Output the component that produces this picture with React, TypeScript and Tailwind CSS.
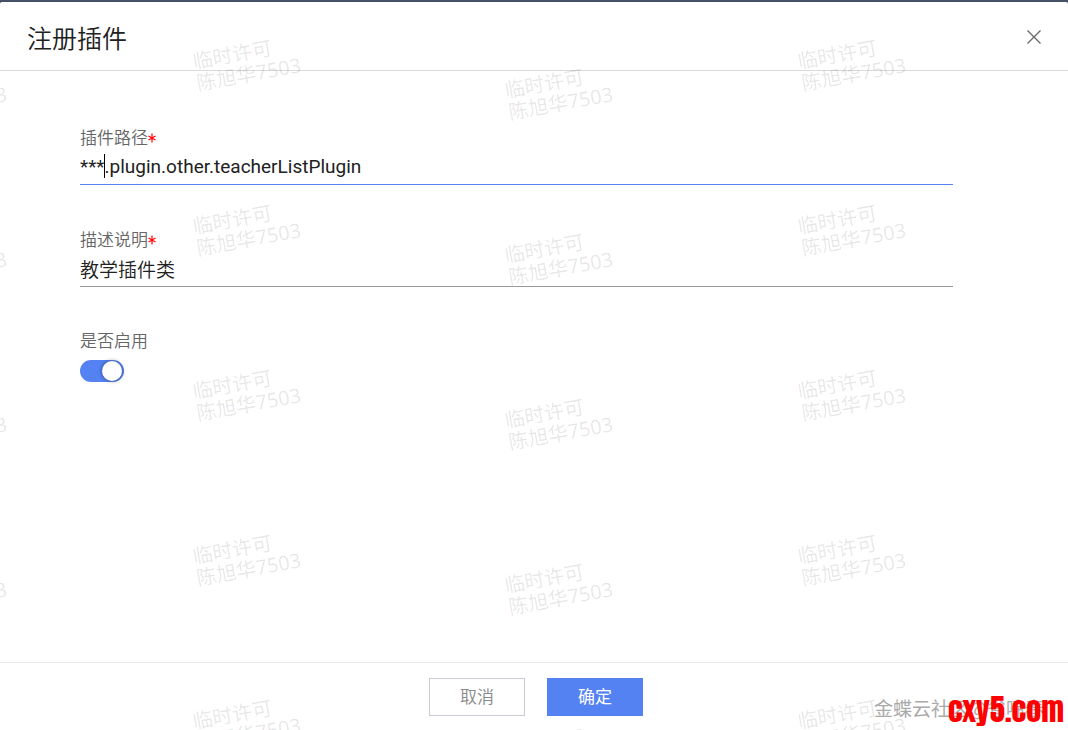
import { useState } from "react";

const rows = [0, 1, 2, 3, 4];

function Mark() {
  return (
    <div className="w-28 -rotate-10 font-['Noto_Sans','Noto_Sans_CJK_SC',sans-serif] text-[20px] leading-[22px] whitespace-nowrap text-black/10">
      临时许可
      <br />
      陈旭华7503
    </div>
  );
}

function MarkColumn({ className }: { className: string }) {
  return (
    <div className={`absolute flex flex-col gap-[121px] ${className}`}>
      {rows.map((row) => (
        <Mark key={row} />
      ))}
    </div>
  );
}

function Watermark() {
  return (
    <div aria-hidden="true" className="pointer-events-none absolute inset-0 overflow-hidden">
      <MarkColumn className="top-[70px] -left-[100px]" />
      <MarkColumn className="top-[41px] left-[194px]" />
      <MarkColumn className="top-[70px] left-[506px]" />
      <MarkColumn className="top-[41px] left-[799px]" />
    </div>
  );
}

function Asterisk() {
  return (
    <svg aria-hidden="true" viewBox="0 0 8 10" className="h-[10px] w-2" fill="none" stroke="#f00" strokeWidth="1.2">
      <path d="M4 .5v9M.5 3l7 4M.5 7l7-4" />
    </svg>
  );
}

const labelClass = "flex h-6 items-center text-[17px] leading-6 font-[350] text-[#666]";
const inputClass =
  "block h-[35px] w-full border-b bg-transparent pb-0.5 text-[19px] text-[#212121] outline-none";

export default function App() {
  const [path, setPath] = useState("***.plugin.other.teacherListPlugin");
  const [description, setDescription] = useState("教学插件类");
  const [enabled, setEnabled] = useState(true);

  return (
    <div className="relative flex min-h-screen flex-col overflow-hidden bg-[#465066] pt-0.5 font-['Roboto','Noto_Sans_CJK_SC',sans-serif]">
      <main className="flex flex-1 flex-col rounded-t-xs bg-white">
        <header className="flex h-[69px] items-center justify-between border-b border-[#d9d9d9] pt-0.5 pr-[26px] pl-[27px]">
          <h1 className="font-['Noto_Sans_CJK_SC',sans-serif] text-[25px] leading-8 font-[350] text-[#212121]">注册插件</h1>
          <button type="button" aria-label="关闭" className="p-px">
            <svg viewBox="0 0 14 14" className="size-[14px]" fill="none" stroke="#666" strokeWidth="1.3">
              <path d="M.5 .5l13 13M13.5 .5l-13 13" />
            </svg>
          </button>
        </header>

        <form id="plugin" className="flex flex-1 flex-col gap-[43px] pt-[55px] pr-[115px] pl-20">
          <div>
            <label htmlFor="path" className={labelClass}>
              插件路径
              <Asterisk />
            </label>
            <div className="relative">
              <input
                id="path"
                value={path}
                onChange={(e) => setPath(e.target.value)}
                className={`${inputClass} border-[#5582f3]`}
              />
              <span aria-hidden="true" className="absolute top-1 left-6 h-6 w-px bg-black" />
            </div>
          </div>
          <div>
            <label htmlFor="description" className={labelClass}>
              描述说明
              <Asterisk />
            </label>
            <input
              id="description"
              value={description}
              onChange={(e) => setDescription(e.target.value)}
              className={`${inputClass} border-[#999] font-[350]`}
            />
          </div>
          <label className="-mt-px flex flex-col items-start gap-[7px]">
            <span className={labelClass}>是否启用</span>
            <input
              type="checkbox"
              role="switch"
              checked={enabled}
              onChange={(e) => setEnabled(e.target.checked)}
              className="flex h-[22px] w-11 appearance-none items-center rounded-full bg-[#bbb] px-0.5 before:size-5 before:rounded-full before:bg-white before:shadow-[0_0_4px_rgba(0,0,0,0.45)] checked:justify-end checked:bg-[#5582f3]"
            />
          </label>
        </form>

        <footer className="flex h-[68px] items-center justify-center gap-[22px] border-t border-[#e8e8e8] pl-1">
          <button type="button" className="h-[38px] w-24 border border-[#c8cad4] pt-0.5 text-[17px] font-[350] text-[#888]">
            取消
          </button>
          <button type="submit" form="plugin" className="h-[38px] w-24 bg-[#5582f3] pt-0.5 text-[17px] text-white">
            确定
          </button>
        </footer>
      </main>

      <Watermark />
      <div className="absolute right-6 bottom-2 font-['Noto_Sans_CJK_SC',sans-serif] text-[19px] leading-7 whitespace-nowrap text-[#aaa]">
        金蝶云社区@雀啼春
      </div>
      <div className="absolute right-1 bottom-0 font-['Impact','Anton','Roboto_Condensed','Liberation_Sans_Narrow',sans-serif] text-[30px] leading-10 font-normal whitespace-nowrap text-[#f00]">
        cxy5.com
      </div>
    </div>
  );
}
